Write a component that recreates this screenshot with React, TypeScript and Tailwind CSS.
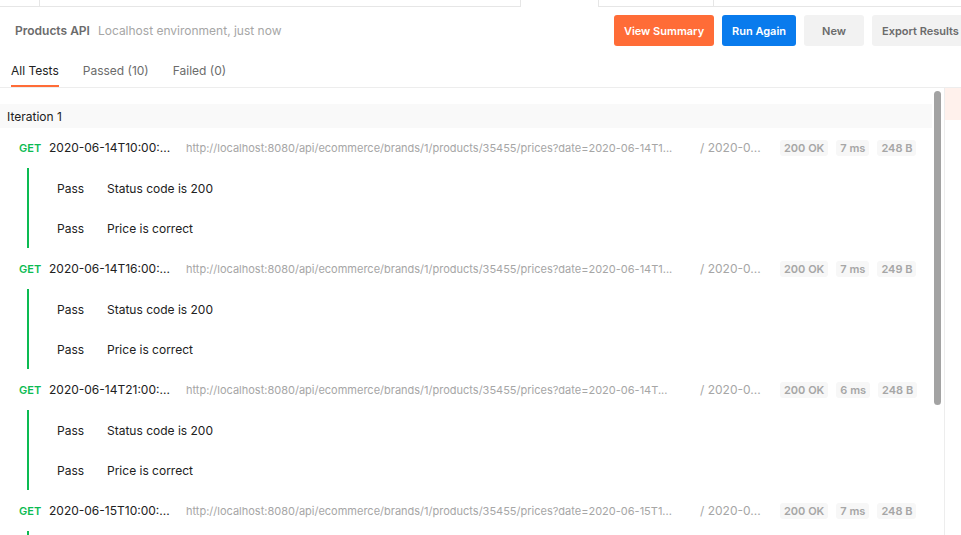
const font = { fontFamily: "Inter, 'Noto Sans', sans-serif" };

type Request = {
  date: string;
  url: string;
  ms: string;
  size: string;
};

const requests: Request[] = [
  {
    date: "2020-06-14T10:00:...",
    url: "http://localhost:8080/api/ecommerce/brands/1/products/35455/prices?date=2020-06-14T1...",
    ms: "7 ms",
    size: "248 B",
  },
  {
    date: "2020-06-14T16:00:...",
    url: "http://localhost:8080/api/ecommerce/brands/1/products/35455/prices?date=2020-06-14T1...",
    ms: "7 ms",
    size: "249 B",
  },
  {
    date: "2020-06-14T21:00:...",
    url: "http://localhost:8080/api/ecommerce/brands/1/products/35455/prices?date=2020-06-14T...",
    ms: "6 ms",
    size: "248 B",
  },
  {
    date: "2020-06-15T10:00:...",
    url: "http://localhost:8080/api/ecommerce/brands/1/products/35455/prices?date=2020-06-15T1...",
    ms: "7 ms",
    size: "248 B",
  },
];

const tests = ["Status code is 200", "Price is correct"];

function Badge({ children }: { children: React.ReactNode }) {
  return (
    <span className="flex h-[16px] items-center rounded-[3px] bg-[#f7f7f7] px-[4px] text-[11px] font-semibold text-[#a6a6a6]">
      {children}
    </span>
  );
}

function RequestBlock({ req }: { req: Request }) {
  return (
    <div className="pb-px">
      <div className="flex h-[40px] items-center pl-[19px]">
        <span className="w-[30px] text-[11px] font-semibold text-[#0cbb52]">GET</span>
        <span className="w-[137px] whitespace-nowrap text-[12px] text-[#212121]">{req.date}</span>
        <span className="w-[514px] whitespace-nowrap text-[11px] text-[#a6a6a6]">{req.url}</span>
        <span className="w-[80px] whitespace-nowrap text-[12px] text-[#a6a6a6]">/ 2020-0...</span>
        <div className="flex gap-[8px]">
          <Badge>200 OK</Badge>
          <Badge>{req.ms}</Badge>
          <Badge>{req.size}</Badge>
        </div>
      </div>
      <div className="ml-[27px] border-l-2 border-[#0cbb52]">
        {tests.map((t) => (
          <div key={t} className="flex h-[40px] items-center pl-[28px] pt-[1px] text-[12px] text-[#212121]">
            <span className="w-[50px]">Pass</span>
            <span>{t}</span>
          </div>
        ))}
      </div>
    </div>
  );
}

export default function App() {
  return (
    <div className="h-[535px] w-[961px] overflow-hidden bg-white" style={font}>
      {/* top tab strip */}
      <div className="flex h-[7px]">
        <div className="w-[40px] border-r border-b border-[#e6e6e6]" />
        <div className="w-[481px] border-r border-b border-[#e6e6e6]" />
        <div className="w-[77px]" />
        <div className="w-[116px] border-x border-b border-[#e6e6e6]" />
        <div className="flex-1 border-b border-[#e6e6e6]" />
      </div>

      {/* header */}
      <div className="flex items-center pt-[8px]">
        <div className="flex w-[614px] shrink-0 items-center gap-[8px] pl-[15px] pt-[1px] text-[12px]">
          <span className="font-semibold text-[#6b6b6b]">Products API</span>
          <span className="text-[#a6a6a6]">Localhost environment, just now</span>
        </div>
        <div className="flex shrink-0 gap-[8px] text-[11px] font-semibold">
          <button className="h-[31px] w-[100px] rounded-[3px] bg-[#ff6c37] pt-[1px] text-white">View Summary</button>
          <button className="h-[31px] w-[74px] rounded-[3px] bg-[#097bed] pt-[1px] text-white">Run Again</button>
          <button className="h-[31px] w-[60px] rounded-[3px] bg-[#f2f2f2] pt-[1px] text-[#6b6b6b]">New</button>
          <button className="h-[31px] w-[100px] shrink-0 rounded-[3px] bg-[#f2f2f2] pl-[10px] pt-[1px] text-left text-[#6b6b6b]">
            Export Results
          </button>
        </div>
      </div>

      {/* result tabs */}
      <div className="mt-[8px] flex h-[34px] gap-[24px] border-b border-[#ededed] pl-[11px] text-[12px]">
        <div className="flex items-center border-b-2 border-[#ff6c37] pt-[3px] text-[#212121]">All Tests</div>
        <div className="flex items-center pt-[1px] text-[#6b6b6b]">Passed (10)</div>
        <div className="flex items-center pt-[1px] text-[#6b6b6b]">Failed (0)</div>
      </div>

      {/* body */}
      <div className="flex">
        <div className="flex w-[944px] shrink-0">
          <div className="w-[932px] shrink-0 pt-[16px]">
            <div className="flex h-[24px] items-center bg-[#f9f9f9] pl-[7px] pt-[1px] text-[12px] text-[#212121]">
              Iteration 1
            </div>
            {requests.map((r, i) => (
              <RequestBlock key={i} req={r} />
            ))}
          </div>
          <div className="flex-1 pl-[2px] pt-[3px]">
            <div className="h-[314px] w-[7px] rounded-[4px] bg-[#a3a3a3]" />
          </div>
        </div>
        <div className="flex-1 border-l border-[#ededed]">
          <div className="h-[32px] bg-[#fff1ec]" />
        </div>
      </div>
    </div>
  );
}
